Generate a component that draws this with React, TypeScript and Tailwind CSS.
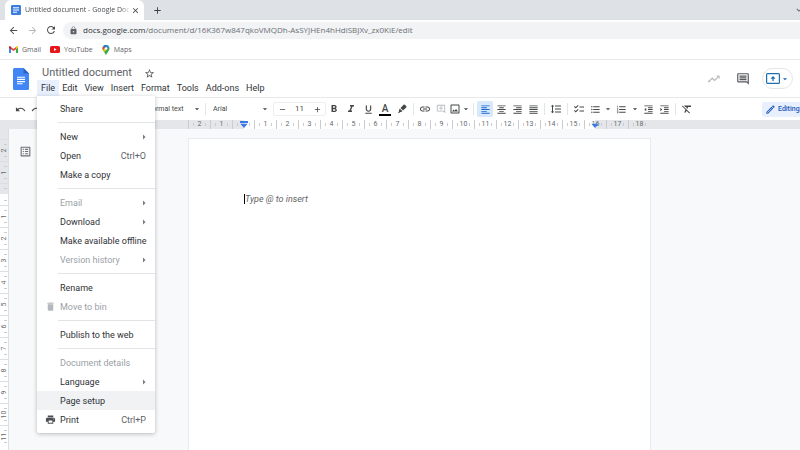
import React from 'react';
import {
  MdAdd,
  MdArrowBack,
  MdArrowDropDown,
  MdArrowForward,
  MdArrowRight,
  MdChecklist,
  MdClose,
  MdDelete,
  MdExpandMore,
  MdFormatAlignCenter,
  MdFormatAlignJustify,
  MdFormatAlignLeft,
  MdFormatAlignRight,
  MdFormatBold,
  MdFormatClear,
  MdFormatIndentDecrease,
  MdFormatIndentIncrease,
  MdFormatItalic,
  MdFormatLineSpacing,
  MdFormatListBulleted,
  MdFormatListNumbered,
  MdFormatPaint,
  MdFormatUnderlined,
  MdInsertLink,
  MdLock,
  MdOutlineAddComment,
  MdOutlineComment,
  MdOutlineEdit,
  MdOutlineImage,
  MdOutlineListAlt,
  MdPrint,
  MdRedo,
  MdRefresh,
  MdRemove,
  MdSpellcheck,
  MdStarBorder,
  MdUndo,
} from 'react-icons/md';

interface MenuItem {
  label: string;
  shortcut?: string;
  submenu?: boolean;
  disabled?: boolean;
  active?: boolean;
  icon?: React.ReactNode;
}

const fileMenu: MenuItem[][] = [
  [{ label: 'Share' }],
  [
    { label: 'New', submenu: true },
    { label: 'Open', shortcut: 'Ctrl+O' },
    { label: 'Make a copy' },
  ],
  [
    { label: 'Email', submenu: true, disabled: true },
    { label: 'Download', submenu: true },
    { label: 'Make available offline' },
    { label: 'Version history', submenu: true, disabled: true },
  ],
  [
    { label: 'Rename' },
    { label: 'Move to bin', disabled: true, icon: <MdDelete className="text-[#b4b7bb]" /> },
  ],
  [{ label: 'Publish to the web' }],
  [
    { label: 'Document details', disabled: true },
    { label: 'Language', submenu: true },
    { label: 'Page setup', active: true },
    { label: 'Print', shortcut: 'Ctrl+P', icon: <MdPrint className="text-[#4a4d51]" /> },
  ],
];

const menus = ['Edit', 'View', 'Insert', 'Format', 'Tools', 'Add-ons', 'Help'];

const DocsFavicon = () => (
  <svg viewBox="0 0 10 10" className="size-[10px] shrink-0" aria-hidden="true">
    <rect width="10" height="10" rx="1.2" fill="#3c7de0" />
    <path d="M2 2.8h6M2 5h6M2 7.2h4" stroke="#fff" strokeWidth="1" />
  </svg>
);

const DocsLogo = () => (
  <svg viewBox="0 0 16 22" className="h-[22px] w-4" aria-hidden="true">
    <path d="M1.5 0H10.5L16 5.5V20.5A1.5 1.5 0 0 1 14.5 22H1.5A1.5 1.5 0 0 1 0 20.5V1.5A1.5 1.5 0 0 1 1.5 0Z" fill="#4285f4" />
    <path d="M10.5 0L16 5.5H10.5Z" fill="#2a62c5" />
    <path d="M4 9.2h8M4 11.4h8M4 13.6h8M4 15.8h5.6" stroke="#fff" strokeWidth="1.1" />
  </svg>
);

const GmailIcon = () => (
  <svg viewBox="0 0 9 7" className="h-[7px] w-[9px]" aria-hidden="true">
    <path d="M0 1.4V6.4Q0 7 .6 7H2V2.6Z" fill="#4285f4" />
    <path d="M9 1.4V6.4Q9 7 8.4 7H7V2.6Z" fill="#34a853" />
    <path d="M2 1V3.2L4.5 5.1L7 3.2V1L4.5 2.9Z" fill="#ea4335" />
    <path d="M0 1.2Q0 0 1 .1L2 .9V3.3L0 1.9Z" fill="#c5221f" />
    <path d="M9 1.2Q9 0 8 .1L7 .9V3.3L9 1.9Z" fill="#fbbc04" />
  </svg>
);

const YouTubeIcon = () => (
  <svg viewBox="0 0 10 7" className="h-[7px] w-[10px]" aria-hidden="true">
    <rect width="10" height="7" rx="1.6" fill="#e8161b" />
    <path d="M4 2V5L6.6 3.5Z" fill="#fff" />
  </svg>
);

const MapsIcon = () => (
  <svg viewBox="0 0 8 10" className="h-[10px] w-2" aria-hidden="true">
    <path d="M4 0A3.5 3.5 0 0 0 .5 3.6Q.5 5 1.5 6L4 10L6.5 6Q7.5 5 7.5 3.6A3.5 3.5 0 0 0 4 0Z" fill="#34a853" />
    <path d="M4 0A3.5 3.5 0 0 0 1.3 1.3L3 2.8L5.2.2Q4.6 0 4 0Z" fill="#1a73e8" />
    <path d="M1.3 1.3A3.5 3.5 0 0 0 .9 5L3 2.8Z" fill="#ea4335" />
    <path d="M.9 5Q1.2 5.7 2.2 7L5 4.4L3 3.2Z" fill="#fbbc04" />
    <path d="M5.2.2A3.5 3.5 0 0 1 7.2 2.2L5 4.4L4.4 2.4Z" fill="#4285f4" />
    <circle cx="4" cy="3.5" r="1.3" fill="#fff" />
  </svg>
);

const ActivityIcon = () => (
  <svg viewBox="0 0 12 8" className="h-2 w-3" fill="none" stroke="#b5b8bb" aria-hidden="true">
    <path d="M.8 6.6L4.2 3.2L6.6 5.4L10.8 1.4" strokeWidth="1.2" />
    <path d="M8.6 1H11.2V3.6" strokeWidth="1" />
    <circle cx="1" cy="6.5" r=".6" fill="#b5b8bb" />
  </svg>
);

const PresentIcon = () => (
  <svg viewBox="0 0 14 11" className="h-[11px] w-[14px]" fill="none" stroke="#1f6fb0" aria-hidden="true">
    <rect x=".6" y=".6" width="12.8" height="9.8" rx="1" strokeWidth="1.2" />
    <path d="M7 8V4" strokeWidth="1.3" />
    <path d="M4.4 5.8L7 3L9.6 5.8Z" fill="#1f6fb0" stroke="none" />
  </svg>
);

const HighlighterIcon = () => (
  <svg viewBox="0 0 10 10" className="size-[10px]" aria-hidden="true">
    <path d="M6.6.8Q7.2.2 7.8.8L9.3 2.3Q9.8 2.9 9.2 3.5L6 6.6L3.5 4.1Z" fill="#444746" />
    <path d="M2.9 4.7L5.4 7.2L4.2 8L3.4 7.9L2.6 8.8H.8L2.1 7.2L2 5.8Z" fill="#444746" />
  </svg>
);

const Divider = () => <div className="mx-[3px] h-3 w-px shrink-0 bg-[#e3e5e8]" />;

interface ToolProps {
  label: string;
  children: React.ReactNode;
  className?: string;
}

const Tool = ({ label, children, className = 'w-4' }: ToolProps) => (
  <button
    type="button"
    aria-label={label}
    className={`flex h-4 shrink-0 items-center justify-center rounded-xs ${className}`}
  >
    {children}
  </button>
);

interface PickerProps {
  label: string;
  value: string;
  className: string;
}

const Picker = ({ label, value, className }: PickerProps) => (
  <label className={`relative flex h-4 shrink-0 items-center ${className}`}>
    <select aria-label={label} className="w-full appearance-none pl-1 text-[7px] leading-4 outline-none">
      <option>{value}</option>
    </select>
    <MdArrowDropDown className="pointer-events-none absolute right-0 size-[10px]" />
  </label>
);

const FileMenu = () => (
  <div
    role="menu"
    className="absolute top-full left-0 z-10 w-[118px] rounded-b-xs bg-white pt-[3px] pb-1 shadow-[0_1px_4px_rgba(60,64,67,0.35)]"
  >
    {fileMenu.map((group, i) => (
      <React.Fragment key={group[0].label}>
        {i > 0 && <div role="separator" className="my-1 ml-[21px] h-px bg-[#e1e3e6]" />}
        {group.map((item) => (
          <button
            key={item.label}
            type="button"
            role="menuitem"
            disabled={item.disabled}
            className={`flex h-[19px] w-full items-center pr-[9px] text-left ${
              item.active ? 'bg-[#f0f2f4]' : ''
            } ${item.disabled ? 'text-[#9a9fa6]' : 'text-[#2f3236]'}`}
          >
            <span className="flex w-[23px] shrink-0 justify-center pl-[3px] text-[11px]">{item.icon}</span>
            <span className="grow whitespace-nowrap">{item.label}</span>
            {item.shortcut && <span className="text-[#5f6368]">{item.shortcut}</span>}
            {item.submenu && <MdArrowRight className="-mr-1 size-3 text-[#77797d]" />}
          </button>
        ))}
      </React.Fragment>
    ))}
  </div>
);

const Browser = () => (
  <div className="shrink-0 border-b border-[#e6e8ea] font-['Open_Sans',sans-serif] text-[#5f6368]">
    {/* Tabs */}
    <div className="flex h-5 items-center bg-[#dee1e6] pl-[5px]">
      <div className="flex h-full w-[139px] items-center rounded-t-md bg-white pr-1 pl-[6px]">
        <DocsFavicon />
        <span className="ml-1 grow overflow-hidden mask-r-from-90% text-[7px] whitespace-nowrap text-[#4a4d51]">
          Untitled document - Google Doc
        </span>
        <button type="button" aria-label="Close tab" className="text-[#3c4043]">
          <MdClose className="size-[9px]" />
        </button>
      </div>
      <button type="button" aria-label="New tab" className="ml-2 text-[#3c4043]">
        <MdAdd className="size-[11px]" />
      </button>
      <button type="button" aria-label="Search tabs" className="-mr-1 ml-auto">
        <MdExpandMore className="size-[10px]" />
      </button>
    </div>

    {/* Address bar */}
    <div className="flex h-5 items-center bg-white pl-2 text-[#4a4d51]">
      <button type="button" aria-label="Back" className="w-[19px]">
        <MdArrowBack className="size-[11px]" />
      </button>
      <button type="button" aria-label="Forward" className="w-[18px] text-[#b8bbbe]">
        <MdArrowForward className="size-[11px]" />
      </button>
      <button type="button" aria-label="Reload" className="w-[18px]">
        <MdRefresh className="size-3" />
      </button>
      <div className="flex h-[17px] grow items-center rounded-l-full bg-[#f1f3f4] pl-[6px]">
        <MdLock className="size-[9px] text-[#5f6368]" />
        <p className="ml-[5px] text-[8px] leading-4 text-[#6b6f74]">
          <span className="text-[#2f3236]">docs.google.com</span>
          /document/d/16K367w847qkoVMQDh-AsSYJHEn4hHdiSBJXv_zx0KiE/edit
        </p>
      </div>
    </div>

    {/* Bookmarks */}
    <nav className="flex h-[19px] items-center gap-[9px] bg-white pl-[9px] text-[7px] leading-3">
      <a href="#gmail" className="flex items-center gap-1">
        <GmailIcon />
        Gmail
      </a>
      <a href="#youtube" className="flex items-center gap-1">
        <YouTubeIcon />
        YouTube
      </a>
      <a href="#maps" className="flex items-center gap-1">
        <MapsIcon />
        Maps
      </a>
    </nav>
  </div>
);

const Header = () => (
  <header className="flex h-[38px] shrink-0 border-b border-[#e6e8ea] bg-white">
    <a href="#home" aria-label="Docs home" className="pt-2 pl-[13px]">
      <DocsLogo />
    </a>
    <div className="ml-2 pt-[6px]">
      <div className="flex h-[14px] items-center pl-[5px]">
        <h1 className="text-[11px] leading-[14px] text-[#5f6368]">Untitled document</h1>
        <button type="button" aria-label="Star" className="ml-3 text-[#55585c]">
          <MdStarBorder className="size-[11px]" />
        </button>
      </div>
      <div className="flex text-[9px] leading-4 text-[#2f3236]">
        <div className="relative">
          <button type="button" aria-expanded="true" className="h-4 bg-[#e8f0fe] px-1">
            File
          </button>
          <FileMenu />
        </div>
        <div className="flex gap-px">
          {menus.map((menu) => (
            <button key={menu} type="button" className="h-4 px-[3px]">
              {menu}
            </button>
          ))}
        </div>
      </div>
    </div>

    <div className="mr-[7px] ml-auto flex items-center">
      <button type="button" aria-label="Activity dashboard">
        <ActivityIcon />
      </button>
      <button type="button" aria-label="Comment history" className="ml-4 text-[#55585c]">
        <MdOutlineComment className="size-[14px]" />
      </button>
      <button
        type="button"
        aria-label="Present"
        className="ml-3 flex h-[21px] w-[31px] items-center justify-center rounded-full border border-[#e3e5e8] text-[#1967a8]"
      >
        <PresentIcon />
        <MdArrowDropDown className="size-[10px]" />
      </button>
    </div>
  </header>
);

const Toolbar = () => (
  <div
    role="toolbar"
    className="flex h-[22px] shrink-0 items-center overflow-hidden bg-white pl-3 text-[11px] text-[#444746]"
  >
    <Tool label="Undo"><MdUndo /></Tool>
    <Tool label="Redo"><MdRedo /></Tool>
    <Tool label="Print"><MdPrint /></Tool>
    <Tool label="Spelling"><MdSpellcheck /></Tool>
    <Tool label="Paint format"><MdFormatPaint /></Tool>
    <Divider />
    <Picker label="Zoom" value="100%" className="w-[37px]" />
    <Divider />
    <Picker label="Styles" value="Normal text" className="w-[59px]" />
    <Divider />
    <Picker label="Font" value="Arial" className="w-[61px]" />
    <div className="ml-[3px] flex h-[14px] w-[53px] shrink-0 items-center rounded-xs border border-[#eceef0]">
      <Tool label="Decrease font size"><MdRemove className="size-[9px]" /></Tool>
      <input aria-label="Font size" defaultValue="11" className="w-0 grow text-center text-[8px] outline-none" />
      <Tool label="Increase font size"><MdAdd className="size-[9px]" /></Tool>
    </div>
    <div className="flex gap-px">
      <Tool label="Bold"><MdFormatBold className="size-3" /></Tool>
      <Tool label="Italic"><MdFormatItalic className="size-3" /></Tool>
      <Tool label="Underline"><MdFormatUnderlined /></Tool>
      <Tool label="Text colour">
        <span className="h-[13px] w-3 border-b-2 border-black text-[10px] leading-[11px] font-medium">A</span>
      </Tool>
      <Tool label="Highlight colour"><HighlighterIcon /></Tool>
    </div>
    <Divider />
    <Tool label="Insert link"><MdInsertLink className="size-3" /></Tool>
    <Tool label="Add comment"><MdOutlineAddComment className="size-[10px] text-[#b5b8bb]" /></Tool>
    <Tool label="Insert image" className="w-[21px]">
      <MdOutlineImage className="size-3 shrink-0" />
      <MdArrowDropDown className="size-[10px] shrink-0" />
    </Tool>
    <Divider />
    <Tool label="Align left" className="w-4 bg-[#d9e8fb] text-[#1967d2]"><MdFormatAlignLeft /></Tool>
    <Tool label="Align centre"><MdFormatAlignCenter /></Tool>
    <Tool label="Align right"><MdFormatAlignRight /></Tool>
    <Tool label="Justify"><MdFormatAlignJustify /></Tool>
    <Divider />
    <Tool label="Line spacing"><MdFormatLineSpacing className="size-3" /></Tool>
    <Divider />
    <Tool label="Checklist"><MdChecklist className="size-3" /></Tool>
    <Tool label="Bulleted list"><MdFormatListBulleted /></Tool>
    <Tool label="Bulleted list options" className="w-[10px]"><MdArrowDropDown className="size-[10px]" /></Tool>
    <Tool label="Numbered list" className="w-[17px]"><MdFormatListNumbered /></Tool>
    <Tool label="Numbered list options" className="w-[10px]"><MdArrowDropDown className="size-[10px]" /></Tool>
    <Tool label="Decrease indent"><MdFormatIndentDecrease /></Tool>
    <Tool label="Increase indent"><MdFormatIndentIncrease /></Tool>
    <Divider />
    <Tool label="Clear formatting"><MdFormatClear className="size-3" /></Tool>
    <button
      type="button"
      className="ml-auto flex h-[15px] w-[38px] shrink-0 items-center gap-[2px] rounded-l-xs bg-[#e8f0fe] pl-[3px] text-[7px] font-medium text-[#1a56b8]"
    >
      <MdOutlineEdit className="size-[11px] shrink-0" />
      Editing
    </button>
  </div>
);

// Centimetre marks, counted outwards from the page margin
const rulerMarks = [2, 1, 0, ...Array.from({ length: 18 }, (_, i) => i + 1)];

const markBackground = (index: number) => {
  if (index < 2 || index > 18) return 'bg-[#e4e6e9]';
  if (index === 2) return 'bg-linear-to-r from-[#e4e6e9] from-50% to-white to-50%';
  if (index === 18) return 'bg-linear-to-r from-white from-50% to-[#e4e6e9] to-50%';
  return 'bg-white';
};

const Ruler = () => (
  <div className="flex h-[9px] shrink-0 overflow-hidden bg-[#e4e6e9] pl-[188px] text-[7px] leading-[9px] text-[#666a6f]">
    {rulerMarks.map((mark, i) => (
      <div
        key={i}
        className={`relative flex w-[22px] shrink-0 items-center justify-between border-l border-[#c9ccd0] ${markBackground(i)}`}
      >
        <span className="ml-1 h-[3px] w-px bg-[#c9ccd0]" />
        {mark > 0 && <span>{mark}</span>}
        <span className="mr-1 h-[3px] w-px bg-[#c9ccd0]" />
        {i === 2 && (
          <svg viewBox="0 0 8 7" className="absolute top-px left-[7px] h-[7px] w-2" aria-hidden="true">
            <path d="M0 0H8V2H0ZM.4 2.8H7.6L4 7Z" fill="#3b78e7" />
          </svg>
        )}
        {i === 18 && (
          <svg viewBox="0 0 8 7" className="absolute top-px left-[6px] h-[7px] w-2" aria-hidden="true">
            <path d="M.4 2.8H7.6L4 7Z" fill="#3b78e7" />
          </svg>
        )}
      </div>
    ))}
  </div>
);

const SideRuler = () => (
  <div className="flex w-[9px] shrink-0 flex-col overflow-hidden border-r border-[#dcdfe2] bg-[#e4e6e9] pt-[10px] text-[7px] leading-none text-[#666a6f]">
    {rulerMarks.slice(0, 14).map((mark, i) => (
      <div
        key={i}
        className={`flex h-[22px] shrink-0 flex-col items-center justify-between border-t border-[#dcdfe2] pl-[2px] ${
          i < 2 ? 'bg-[#e4e6e9]' : i === 2 ? 'bg-linear-to-b from-[#e4e6e9] from-50% to-white to-50%' : 'bg-white'
        }`}
      >
        <span className="mt-1 h-px w-[3px] bg-[#c9ccd0]" />
        {mark > 0 && <span className="-rotate-90">{mark}</span>}
        <span className="mb-1 h-px w-[3px] bg-[#c9ccd0]" />
      </div>
    ))}
    <div className="grow bg-white" />
  </div>
);

const App = () => {
  return (
    <div className="flex h-screen flex-col overflow-hidden bg-[#f8f9fa] font-[Roboto,sans-serif]">
      <Browser />
      <Header />
      <Toolbar />
      <Ruler />
      <main className="flex min-h-0 grow overflow-hidden">
        <SideRuler />
        <div className="flex w-[179px] shrink-0 items-start pt-4 pl-[10px]">
          <button type="button" aria-label="Show document outline" className="text-[#6b6f74]">
            <MdOutlineListAlt className="size-[13px]" />
          </button>
        </div>
        <article className="mt-[9px] w-[463px] shrink-0 border border-b-0 border-[#e8eaed] bg-white px-[55px] pt-[54px]">
          <p className="flex items-center text-[9px] leading-3 text-[#5f6368] italic">
            <span className="h-[10px] w-px bg-black" />
            Type @ to insert
          </p>
        </article>
      </main>
    </div>
  );
};

export default App;
